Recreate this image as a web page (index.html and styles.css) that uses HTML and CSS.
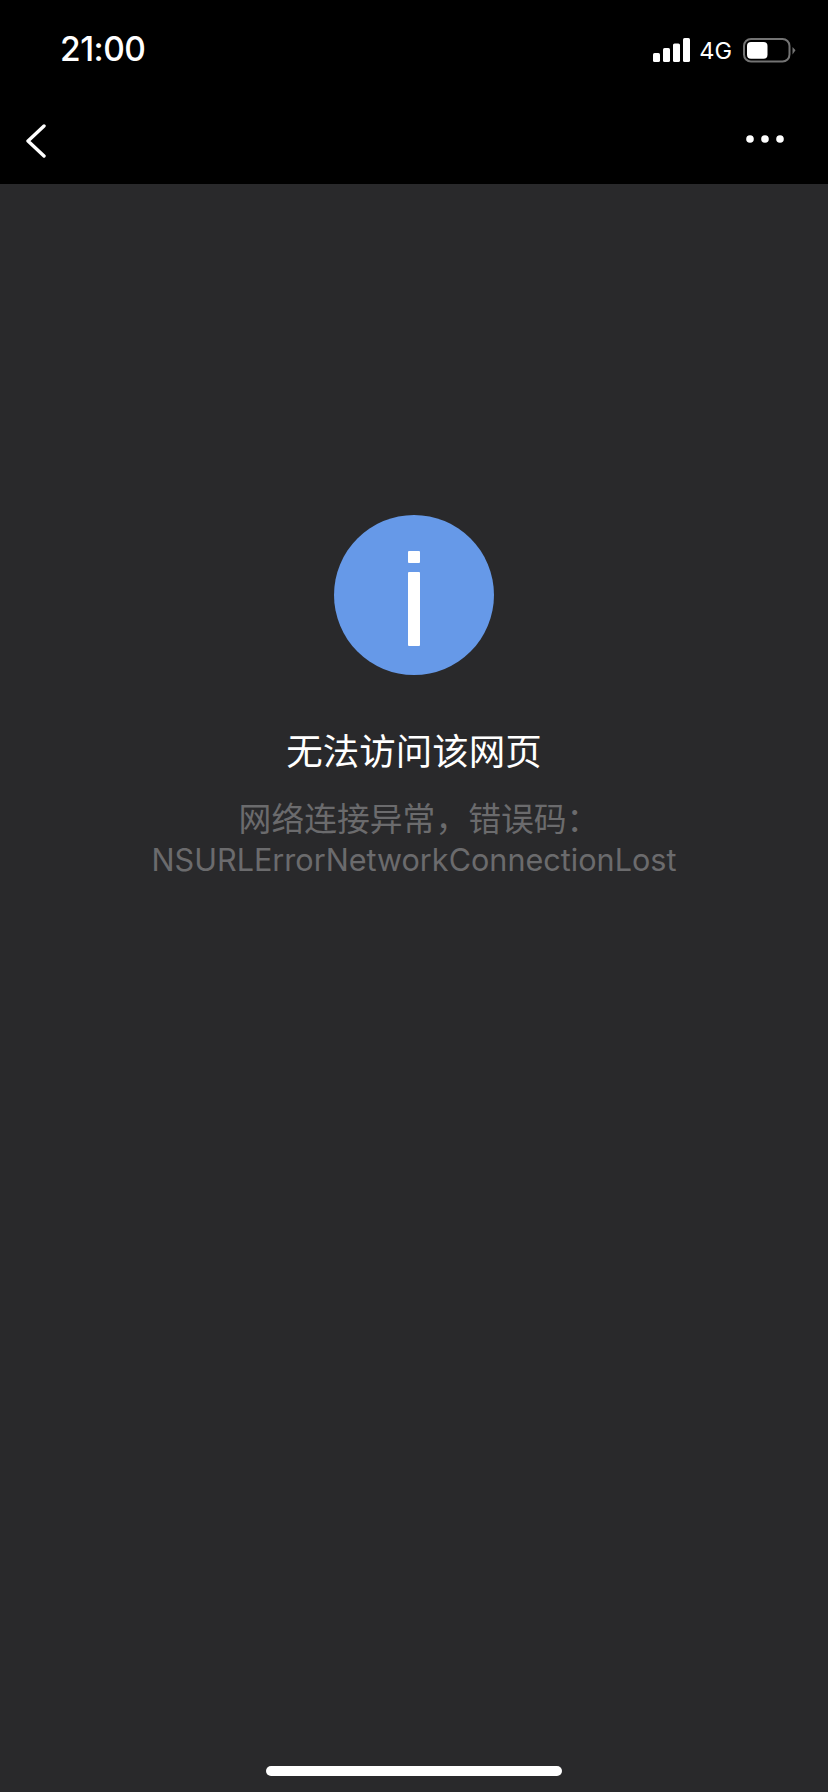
FILE: index.html
```html
<!DOCTYPE html>
<html lang="zh">
<head>
<meta charset="utf-8">
<title>无法访问该网页</title>
<link rel="stylesheet" href="styles.css">
</head>
<body>
<div class="phone">
  <header class="top">
    <div class="status">
      <span class="time">21:00</span>
      <div class="indicators">
        <svg class="signal" width="37" height="24" viewBox="0 0 37 24" aria-hidden="true">
          <rect x="0" y="15" width="7" height="9" rx="1.6" fill="#fff"/>
          <rect x="10" y="10" width="7" height="14" rx="1.6" fill="#fff"/>
          <rect x="20" y="5.5" width="7" height="18.5" rx="1.6" fill="#fff"/>
          <rect x="30" y="0" width="7" height="24" rx="1.6" fill="#fff"/>
        </svg>
        <span class="net">4G</span>
        <svg class="battery" width="53" height="25" viewBox="0 0 53 25" aria-hidden="true">
          <rect x="1" y="1" width="45.5" height="22.5" rx="7" fill="none" stroke="#737373" stroke-width="2"/>
          <rect x="4" y="4" width="20.5" height="16.8" rx="4" fill="#fff"/>
          <path d="M49.5 9 L52.5 12.3 L49.5 16.5 Z" fill="#737373"/>
        </svg>
      </div>
    </div>
    <nav class="nav">
      <svg class="back" width="24" height="34" viewBox="0 0 24 34" aria-hidden="true">
        <path d="M20 2 L4 17 L20 32" fill="none" stroke="#fff" stroke-width="3.4" stroke-linecap="round" stroke-linejoin="round"/>
      </svg>
      <svg class="more" width="38" height="8" viewBox="0 0 38 8" aria-hidden="true">
        <circle cx="4" cy="4" r="3.8" fill="#fff"/>
        <circle cx="19" cy="4" r="3.8" fill="#fff"/>
        <circle cx="34" cy="4" r="3.8" fill="#fff"/>
      </svg>
    </nav>
  </header>
  <main class="content">
    <svg class="info" width="160" height="160" viewBox="0 0 160 160" aria-hidden="true">
      <circle cx="80" cy="80" r="80" fill="#6699e8"/>
      <rect x="74" y="36" width="12" height="12" rx="1" fill="#fff"/>
      <rect x="74" y="57" width="12" height="74" rx="1" fill="#fff"/>
    </svg>
    <h1 class="title">无法访问该网页</h1>
    <p class="message"><span class="message-cn">网络连接异常，错误码：</span><br>NSURLErrorNetworkConnectionLost</p>
  </main>
  <div class="home"><span class="home-bar"></span></div>
</div>
</body>
</html>
```
FILE: styles.css
```css
* { box-sizing: border-box; }
html, body { margin: 0; padding: 0; background: #29292b; }
body { font-family: Inter, "Noto Sans CJK SC", sans-serif; }
.phone { width: 828px; height: 1792px; display: flex; flex-direction: column; overflow: hidden; background: #29292b; }
.top { height: 184px; background: #000; color: #fff; flex: none; }
.status { height: 100px; display: flex; align-items: center; justify-content: space-between; padding: 0 32px 0 60px; }
.time { font-size: 33.5px; font-weight: 500; letter-spacing: -0.5px; line-height: 1; }
.indicators { display: flex; align-items: center; }
.signal { display: block; }
.net { font-size: 23.5px; font-weight: 400; line-height: 1; margin: 2px 11px 0 9px; }
.battery { display: block; }
.nav { height: 84px; display: flex; align-items: center; justify-content: space-between; padding: 0 44px 2px 24px; }
.back { display: block; }
.more { display: block; margin-bottom: 4px; }
.content { flex: 1; display: flex; flex-direction: column; align-items: center; padding-top: 331px; }
.info { display: block; flex: none; }
.title { margin: 53px 0 0; font-family: "Noto Sans CJK SC", sans-serif; font-size: 36.5px; font-weight: 400; line-height: 44px; color: #fff; text-align: center; }
.message { margin: 28px 0 0; font-size: 30.6px; font-weight: 400; line-height: 39.5px; color: #6b6b6d; text-align: center; font-family: Inter, "Noto Sans CJK SC", sans-serif; }
.message-cn { font-size: 32.8px; padding-left: 10px; }
.home { height: 26px; flex: none; display: flex; justify-content: center; }
.home-bar { display: block; width: 296px; height: 10px; border-radius: 5px; background: #fff; }
```
